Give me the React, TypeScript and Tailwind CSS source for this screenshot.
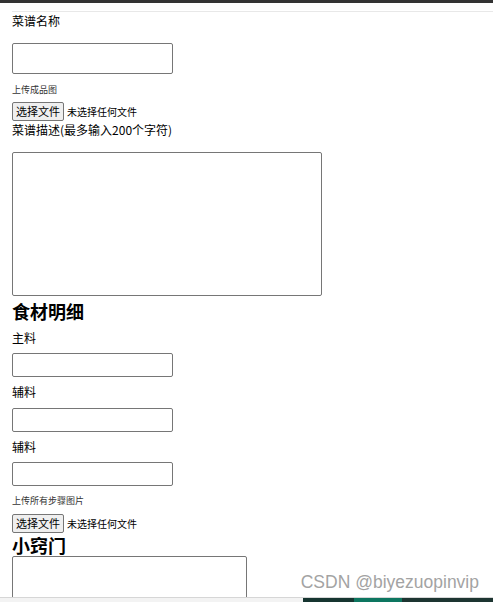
import React from "react";

const cjk = { fontFamily: '"Microsoft YaHei", "Noto Sans CJK SC", "Noto Sans", sans-serif' };

function FileRow({ mt }: { mt: string }) {
  return (
    <div className={`flex items-center h-[19px] ${mt}`}>
      <div className="h-[19px] w-[52px] flex items-center justify-center border border-[#767676] rounded-[2px] bg-[#efefef] text-[11px] text-black leading-none">
        选择文件
      </div>
      <span className="ml-[3px] text-[10px] text-black leading-none">未选择任何文件</span>
    </div>
  );
}

export default function App() {
  return (
    <div className="relative w-[493px] h-[602px] overflow-hidden bg-white text-black" style={cjk}>
      <div className="h-[3px] bg-[#333333]" />
      <div className="pl-[12px]">
        <div className="mt-[8px] border-t border-[#e8e8e8]" />
        <div className="mt-[1px] h-[16px] text-[12px] leading-[16px]">菜谱名称</div>
        <div className="mt-[14px] w-[161px] h-[31px] border border-[#767676] rounded-[2px]" />
        <div className="mt-[10px] h-[12px] text-[9px] leading-[12px] text-[#333]">上传成品图</div>
        <FileRow mt="mt-[6px]" />
        <div className="mt-[1px] h-[16px] text-[12px] leading-[16px]">菜谱描述(最多输入200个字符)</div>
        <div className="mt-[14px] w-[310px] h-[144px] border border-[#767676] rounded-[2px]" />
        <div className="mt-[3px] h-[24px] text-[18px] font-bold leading-[24px]">食材明细</div>
        <div className="mt-[7px] h-[16px] text-[12px] leading-[16px]">主料</div>
        <div className="mt-[7px] w-[161px] h-[24px] border border-[#767676] rounded-[2px]" />
        <div className="mt-[7px] h-[16px] text-[12px] leading-[16px]">辅料</div>
        <div className="mt-[8px] w-[161px] h-[24px] border border-[#767676] rounded-[2px]" />
        <div className="mt-[7px] h-[16px] text-[12px] leading-[16px]">辅料</div>
        <div className="mt-[7px] w-[161px] h-[24px] border border-[#767676] rounded-[2px]" />
        <div className="mt-[9px] h-[12px] text-[9px] leading-[12px] text-[#333]">上传所有步骤图片</div>
        <FileRow mt="mt-[7px]" />
        <div className="mt-[1px] h-[22px] text-[18px] font-bold leading-[22px]">小窍门</div>
        <div className="w-[235px] h-[60px] border border-[#767676] rounded-[2px]" />
      </div>

      <div
        className="absolute right-[14px] top-[571px] text-[17.5px] leading-[22px] text-[#a3a3a3]"
        style={{ fontFamily: '"Liberation Sans", Arial, sans-serif' }}
      >
        CSDN @biyezuopinvip
      </div>

      <div className="absolute left-0 right-0 bottom-0 h-[5px] border-t border-[#d6d6d6] bg-[#f3f3f3] flex">
        <div className="w-[303px]" />
        <div className="w-[51px] bg-[#163530]" />
        <div className="w-[48px] bg-[#0d7660]" />
        <div className="flex-1 bg-[#1d3531]" />
      </div>
    </div>
  );
}
